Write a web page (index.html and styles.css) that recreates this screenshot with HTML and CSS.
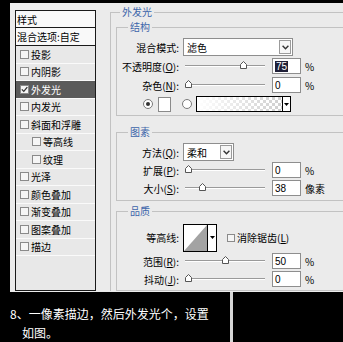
FILE: index.html
```html
<!DOCTYPE html>
<html lang="zh-CN">
<head>
    <meta charset="UTF-8">
    <meta name="viewport" content="width=device-width, initial-scale=1.0">
    <title>图层样式 - 外发光</title>
    <link rel="stylesheet" href="styles.css">
</head>
<body>
    <div class="dialog">
        <div class="styles-col">
            <div class="style-list">
                <div class="list-head">样式</div>
                <div class="list-blend">混合选项:自定</div>
                <div class="list-item"><span class="check"></span>投影</div>
                <div class="list-item"><span class="check"></span>内阴影</div>
                <div class="list-item selected">
                    <span class="check"><svg width="7" height="7" viewBox="0 0 7 7"><path d="M0.8 3.4L2.8 5.4L6.3 1.2" fill="none" stroke="#333" stroke-width="1.3"/></svg></span>外发光
                </div>
                <div class="list-item"><span class="check"></span>内发光</div>
                <div class="list-item"><span class="check"></span>斜面和浮雕</div>
                <div class="list-item sub"><span class="check"></span>等高线</div>
                <div class="list-item sub"><span class="check"></span>纹理</div>
                <div class="list-item"><span class="check"></span>光泽</div>
                <div class="list-item"><span class="check"></span>颜色叠加</div>
                <div class="list-item"><span class="check"></span>渐变叠加</div>
                <div class="list-item"><span class="check"></span>图案叠加</div>
                <div class="list-item"><span class="check"></span>描边</div>
            </div>
        </div>

        <div class="options-col">
            <fieldset class="outer">
                <legend>外发光</legend>

                <fieldset class="group structure">
                    <legend>结构</legend>
                    <div class="rows">
                        <div class="row">
                            <span class="lbl">混合模式:</span>
                            <div class="select mode">
                                <span>滤色</span>
                                <span class="drop"><svg width="7" height="5" viewBox="0 0 7 5"><path d="M0.6 0.8L3.5 3.8L6.4 0.8" fill="none" stroke="#333" stroke-width="1.4"/></svg></span>
                            </div>
                        </div>
                        <div class="row">
                            <span class="lbl">不透明度(<u>O</u>):</span>
                            <div class="slider"><span class="thumb" style="left:55px"><svg width="7" height="8" viewBox="0 0 7 8"><path d="M0.5 7.5V3.5L3.5 0.5L6.5 3.5V7.5Z" fill="#fff" stroke="#555"/></svg></span></div>
                            <span class="num"><span class="hl">75</span></span>
                            <span class="unit">%</span>
                        </div>
                        <div class="row">
                            <span class="lbl">杂色(<u>N</u>):</span>
                            <div class="slider"><span class="thumb" style="left:0px"><svg width="7" height="8" viewBox="0 0 7 8"><path d="M0.5 7.5V3.5L3.5 0.5L6.5 3.5V7.5Z" fill="#fff" stroke="#555"/></svg></span></div>
                            <span class="num">0</span>
                            <span class="unit">%</span>
                        </div>
                        <div class="row swatches">
                            <span class="radio on"><span class="dot"></span></span>
                            <span class="swatch"></span>
                            <span class="radio"></span>
                            <div class="gradient">
                                <span class="ramp"></span>
                                <span class="g-drop"><svg width="5" height="3" viewBox="0 0 5 3"><path d="M0 0H5L2.5 3Z" fill="#000"/></svg></span>
                            </div>
                        </div>
                    </div>
                </fieldset>

                <fieldset class="group elements">
                    <legend>图素</legend>
                    <div class="rows">
                        <div class="row">
                            <span class="lbl">方法(<u>Q</u>):</span>
                            <div class="select method">
                                <span>柔和</span>
                                <span class="drop"><svg width="7" height="5" viewBox="0 0 7 5"><path d="M0.6 0.8L3.5 3.8L6.4 0.8" fill="none" stroke="#333" stroke-width="1.4"/></svg></span>
                            </div>
                        </div>
                        <div class="row">
                            <span class="lbl">扩展(<u>P</u>):</span>
                            <div class="slider"><span class="thumb" style="left:0px"><svg width="7" height="8" viewBox="0 0 7 8"><path d="M0.5 7.5V3.5L3.5 0.5L6.5 3.5V7.5Z" fill="#fff" stroke="#555"/></svg></span></div>
                            <span class="num">0</span>
                            <span class="unit">%</span>
                        </div>
                        <div class="row">
                            <span class="lbl">大小(<u>S</u>):</span>
                            <div class="slider"><span class="thumb" style="left:14px"><svg width="7" height="8" viewBox="0 0 7 8"><path d="M0.5 7.5V3.5L3.5 0.5L6.5 3.5V7.5Z" fill="#fff" stroke="#555"/></svg></span></div>
                            <span class="num">38</span>
                            <span class="unit">像素</span>
                        </div>
                    </div>
                </fieldset>

                <fieldset class="group quality">
                    <legend>品质</legend>
                    <div class="rows">
                        <div class="row contour-row">
                            <span class="lbl">等高线:</span>
                            <div class="contour">
                                <svg class="curve" width="23" height="26" viewBox="0 0 23 26"><rect width="23" height="26" fill="#fff"/><path d="M0 26L23 0V26Z" fill="#a3a3a3"/></svg>
                                <span class="c-drop"><svg width="5" height="3" viewBox="0 0 5 3"><path d="M0 0H5L2.5 3Z" fill="#000"/></svg></span>
                            </div>
                            <label class="aa"><span class="check small"></span>消除锯齿(<u>L</u>)</label>
                        </div>
                        <div class="row">
                            <span class="lbl">范围(<u>R</u>):</span>
                            <div class="slider"><span class="thumb" style="left:37px"><svg width="7" height="8" viewBox="0 0 7 8"><path d="M0.5 7.5V3.5L3.5 0.5L6.5 3.5V7.5Z" fill="#fff" stroke="#555"/></svg></span></div>
                            <span class="num">50</span>
                            <span class="unit">%</span>
                        </div>
                        <div class="row">
                            <span class="lbl">抖动(<u>J</u>):</span>
                            <div class="slider"><span class="thumb" style="left:0px"><svg width="7" height="8" viewBox="0 0 7 8"><path d="M0.5 7.5V3.5L3.5 0.5L6.5 3.5V7.5Z" fill="#fff" stroke="#555"/></svg></span></div>
                            <span class="num">0</span>
                            <span class="unit">%</span>
                        </div>
                    </div>
                </fieldset>
            </fieldset>
        </div>
    </div>

    <div class="caption-row">
        <div class="caption">8、一像素描边，然后外发光个，设置<br>如图。</div>
        <div class="divider"></div>
    </div>
</body>
</html>
```

FILE: styles.css
```css
body {
    margin: 0;
    width: 343px;
    height: 342px;
    overflow: hidden;
    background: #000;
    font-family: "Noto Sans CJK SC", "Noto Sans", sans-serif;
    font-size: 10px;
    color: #000;
}
.dialog {
    display: flex;
    height: 289px;
    margin: 3px 0 0 10px;
    background: #ebebeb;
}

/* left: style list */
.styles-col {
    flex: none;
    width: 97px;
    padding: 7px 0 0 5px;
    box-sizing: border-box;
}
.style-list {
    width: 81px;
    height: 281px;
    box-sizing: border-box;
    border: 1px solid #1a1a1a;
    background: #e8e8e8;
}
.list-head,
.list-blend {
    display: flex;
    align-items: center;
    padding-left: 1px;
    background: #f9f9f9;
    border-bottom: 1px solid #1a1a1a;
}
.list-head {
    height: 16px;
}
.list-blend {
    height: 17px;
}
.list-item {
    display: flex;
    align-items: center;
    height: 17.5px;
    box-sizing: border-box;
    padding-left: 4px;
    border-bottom: 1px solid #fafafa;
}
.list-item.sub {
    padding-left: 16px;
}
.list-item.selected {
    background: #5b5b5b;
    color: #fff;
}
.check {
    flex: none;
    display: flex;
    align-items: center;
    justify-content: center;
    width: 9px;
    height: 9px;
    box-sizing: border-box;
    margin-right: 2px;
    border: 1px solid #8a8a8a;
    background: #f5f5f5;
}
.check.small {
    width: 8px;
    height: 8px;
}

/* right: options */
.options-col {
    flex: 1;
    min-width: 0;
    overflow: hidden;
    padding-top: 3px;
}
fieldset {
    margin: 0;
    min-width: 0;
    border: 1px solid #c2c2c2;
}
legend {
    padding: 0 2px;
    line-height: 12px;
    color: #3d66aa;
}
.outer {
    width: 250px;
    margin-left: 3px;
    padding: 0 0 0 5px;
    border-bottom: none;
}
.outer > legend {
    margin-left: 4px;
}
.group > legend {
    margin-left: 11px;
}
.structure {
    margin-top: 3px;
    padding: 5px 0 2px;
}
.elements {
    margin-top: 10px;
    padding: 5px 0 3px;
}
.quality {
    margin-top: 4px;
    padding: 6px 0 2px;
}
.rows {
    display: grid;
}
.structure .rows {
    row-gap: 1px;
}
.row {
    display: flex;
    align-items: center;
    height: 18px;
}
.row.contour-row {
    height: 29px;
}
.lbl {
    flex: none;
    width: 62px;
    margin-right: 4px;
    text-align: right;
    white-space: nowrap;
}
.select {
    display: flex;
    align-items: center;
    justify-content: space-between;
    height: 18px;
    box-sizing: border-box;
    padding-left: 3px;
    border: 1px solid #8e8e8e;
    background: #fff;
}
.select.mode {
    width: 110px;
}
.select.method {
    width: 51px;
}
.drop {
    display: flex;
    align-items: center;
    justify-content: center;
    width: 12px;
    height: 14px;
    box-sizing: border-box;
    margin-right: 1px;
    border: 1px solid #9b9b9b;
    background: #f6f6f6;
}
.slider {
    position: relative;
    flex: none;
    width: 80px;
    height: 18px;
    margin-left: 2px;
}
.slider::before {
    content: "";
    position: absolute;
    left: 0;
    right: 0;
    top: 8px;
    height: 1px;
    background: #9a9a9a;
    box-shadow: 0 1px 0 #fff;
}
.thumb {
    position: absolute;
    top: 4px;
    width: 7px;
    height: 8px;
    line-height: 0;
}
.num {
    flex: none;
    display: flex;
    align-items: center;
    width: 29px;
    height: 16px;
    box-sizing: border-box;
    margin-left: 7px;
    padding-left: 2px;
    border: 1px solid #8e8e8e;
    background: #fff;
    font-family: "Liberation Sans", sans-serif;
}
.hl {
    padding: 0 1px;
    background: #202038;
    color: #fff;
}
.unit {
    margin-left: 4px;
}

.swatches {
    padding-left: 26px;
}
.radio {
    flex: none;
    display: flex;
    align-items: center;
    justify-content: center;
    width: 10px;
    height: 10px;
    box-sizing: border-box;
    border: 1px solid #7a7a7a;
    border-radius: 50%;
    background: #fff;
}
.dot {
    width: 4px;
    height: 4px;
    border-radius: 50%;
    background: #333;
}
.swatch {
    flex: none;
    width: 13px;
    height: 15px;
    box-sizing: border-box;
    margin: 0 11px 0 5px;
    border: 1px solid #8a8a8a;
    background: #fff;
}
.gradient {
    display: flex;
    width: 95px;
    height: 16px;
    box-sizing: border-box;
    margin-left: 4px;
    border: 1px solid #000;
}
.ramp {
    flex: 1;
    background:
        linear-gradient(to right, #fff 0%, rgba(255, 255, 255, 0) 100%),
        conic-gradient(#cfcfcf 25%, #fff 0 50%, #cfcfcf 0 75%, #fff 0) 0 0 / 6px 6px;
}
.g-drop,
.c-drop {
    display: flex;
    align-items: center;
    justify-content: center;
    border-left: 1px solid #000;
    background: #fff;
}
.g-drop {
    width: 7px;
}
.contour {
    display: flex;
    width: 34px;
    height: 28px;
    box-sizing: border-box;
    border: 1px solid #000;
}
.curve {
    display: block;
    margin: 0;
}
.c-drop {
    flex: 1;
}
.aa {
    display: flex;
    align-items: center;
    margin-left: 10px;
}

/* caption under the screenshot */
.caption-row {
    display: flex;
    height: 50px;
}
.caption {
    width: 230px;
    box-sizing: border-box;
    padding: 12px 0 0 22px;
    text-indent: -12px;
    color: #fff;
    font-size: 12px;
    line-height: 19px;
}
.divider {
    width: 3px;
    background: #d6d6d6;
}
```
